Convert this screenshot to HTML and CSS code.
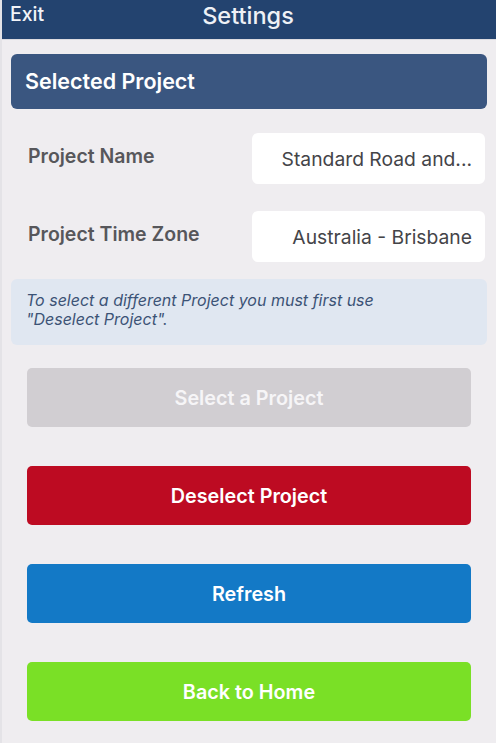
FILE: index.html
```html
<!DOCTYPE html>
<html>
<head>
<meta charset="utf-8">
<link rel="stylesheet" href="styles.css">
</head>
<body>
<header class="topbar">
  <span class="exit">Exit</span>
  <span class="title">Settings</span>
</header>
<main class="content">
  <div class="section-head">Selected Project</div>
  <div class="rows">
    <div class="row">
      <span class="label">Project Name</span>
      <span class="value">Standard Road and...</span>
    </div>
    <div class="row">
      <span class="label">Project Time Zone</span>
      <span class="value">Australia - Brisbane</span>
    </div>
  </div>
  <div class="info">To select a different Project you must first use<br>"Deselect Project".</div>
  <div class="buttons">
    <button class="btn btn-disabled">Select a Project</button>
    <button class="btn btn-red">Deselect Project</button>
    <button class="btn btn-blue">Refresh</button>
    <button class="btn btn-green">Back to Home</button>
  </div>
</main>
</body>
</html>
```
FILE: styles.css
```css
* { box-sizing: border-box; }
html, body { margin: 0; padding: 0; }
body {
  background: #efedf0;
  font-family: Inter, "Liberation Sans", sans-serif;
  width: 496px;
  height: 743px;
  overflow: hidden;
  border-left: 2px solid #e4e3e7;
}
.topbar {
  height: 40px;
  background: #23436f;
  position: relative;
  display: flex;
  align-items: center;
  justify-content: center;
  border-bottom: 1px solid #dcdbe0;
  margin-left: -2px;
}
.exit {
  position: absolute;
  left: 10px;
  top: 2px;
  color: #f2f4f8;
  font-size: 19.5px;
  font-weight: 500;
}
.title {
  color: #eef1f6;
  font-size: 23.5px;
  font-weight: 500;
  margin-top: -9px;
}
.content {
  padding: 14px 9px 0 9px;
  display: flex;
  flex-direction: column;
}
.section-head {
  height: 55px;
  background: #3a5680;
  border-radius: 6px;
  color: #fff;
  font-size: 21.5px;
  font-weight: 600;
  display: flex;
  align-items: center;
  padding-left: 14px;
  padding-bottom: 1px;
}
.rows {
  margin-top: 24px;
  display: flex;
  flex-direction: column;
  gap: 27px;
}
.row {
  display: flex;
  align-items: center;
  height: 51px;
}
.label {
  flex: 1;
  padding-left: 17px;
  padding-bottom: 5px;
  color: #57575b;
  font-size: 19.5px;
  font-weight: 600;
}
.value {
  width: 233px;
  height: 51px;
  margin-right: 2px;
  background: #fff;
  border-radius: 6px;
  display: flex;
  align-items: center;
  justify-content: flex-end;
  padding-right: 13px;
  color: #444448;
  font-size: 19.3px;
}
.info {
  margin-top: 17px;
  height: 66px;
  background: #e0e7f1;
  border-radius: 6px;
  padding: 12px 15px 0 15px;
  color: #3c5376;
  font-style: italic;
  font-size: 16px;
  line-height: 19px;
}
.buttons {
  margin-top: 23px;
  padding: 0 16px;
  display: flex;
  flex-direction: column;
  gap: 39px;
}
.btn {
  height: 59px;
  border: none;
  border-radius: 5px;
  font-family: inherit;
  font-size: 19.8px;
  font-weight: 600;
  color: #fff;
  padding: 0;
}
.btn-disabled { background: #d1ced2; color: #f6f5f7; }
.btn-red { background: #bd0b22; }
.btn-blue { background: #1379c6; }
.btn-green { background: #7ae026; }
```
